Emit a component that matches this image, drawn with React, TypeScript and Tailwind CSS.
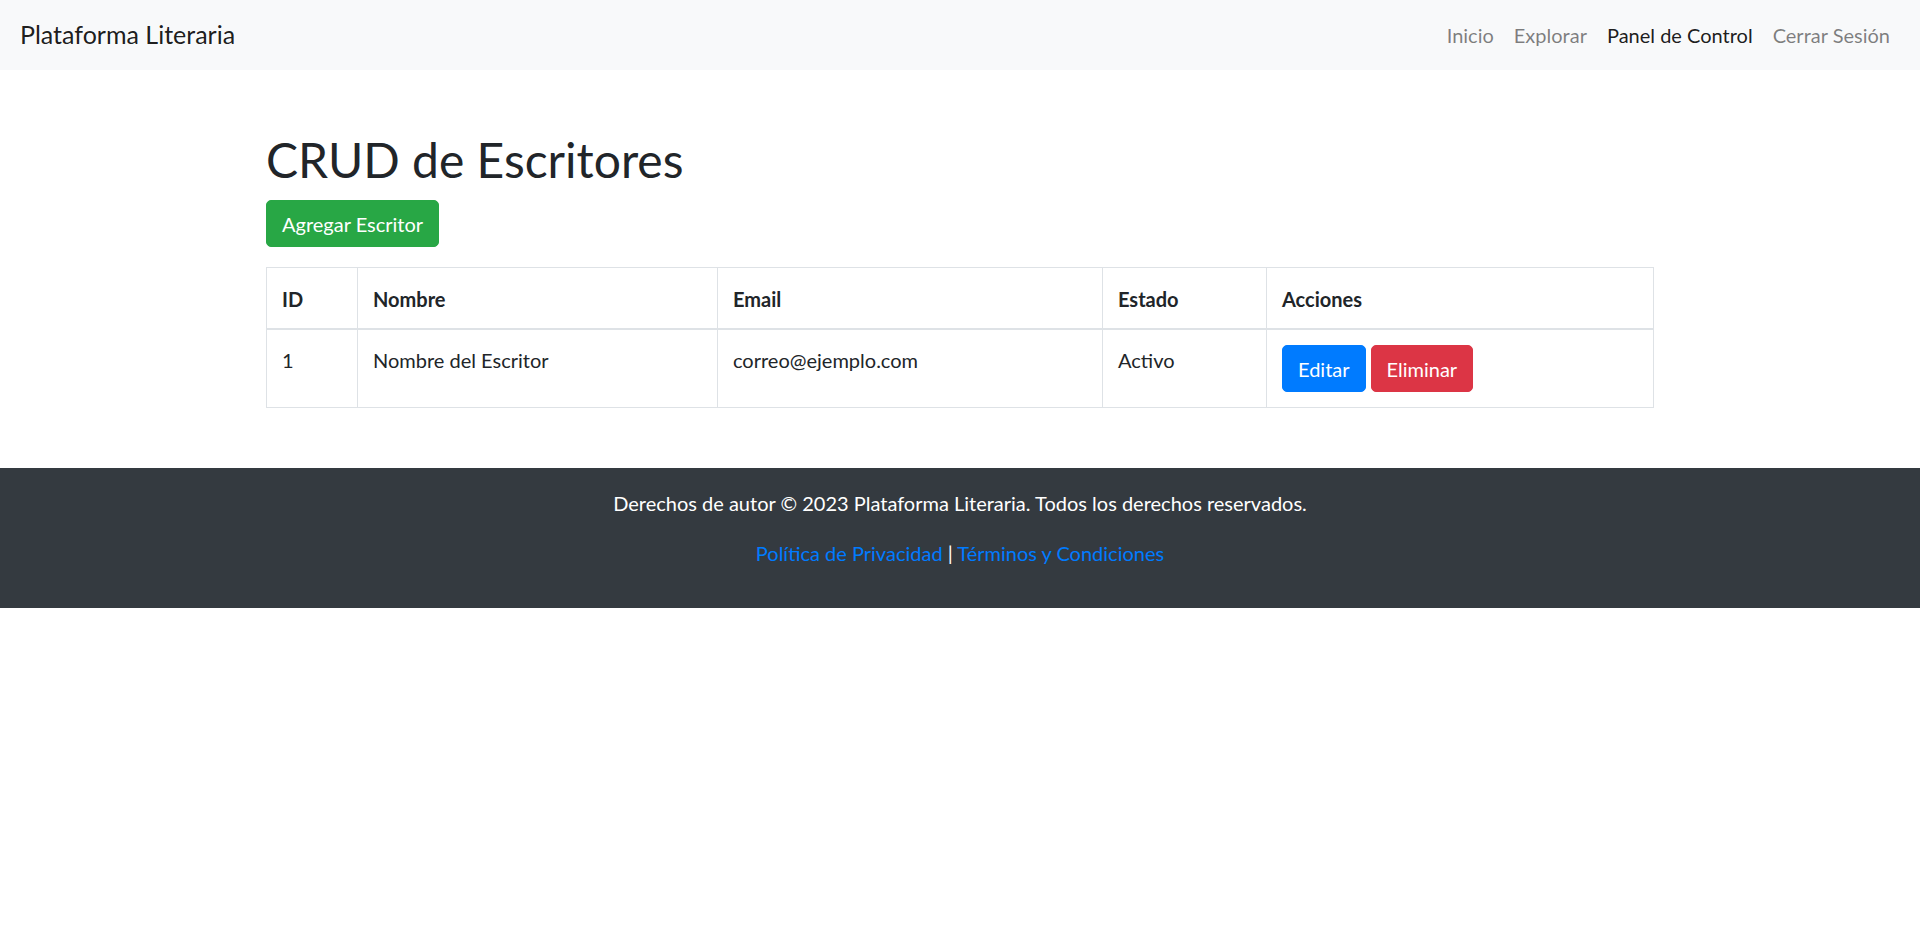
const navLinks = [
  { label: "Inicio", active: false },
  { label: "Explorar", active: false },
  { label: "Panel de Control", active: true },
  { label: "Cerrar Sesión", active: false },
];

export default function App() {
  return (
    <div className="min-h-screen bg-white font-['Lato',sans-serif] text-[20px] leading-[30px] text-[#212529]">
      {/* Navbar */}
      <nav className="flex h-[70px] items-center justify-between bg-[#f8f9fa] px-5">
        <a href="#" className="mr-5 py-[6px] text-[25px] leading-[37.5px] text-black/90">
          Plataforma Literaria
        </a>
        <ul className="flex items-center">
          {navLinks.map((l) => (
            <li key={l.label}>
              <a
                href="#"
                className={
                  l.active
                    ? "block px-[10px] py-[10px] text-black/90"
                    : "block px-[10px] py-[10px] text-black/50"
                }
              >
                {l.label}
              </a>
            </li>
          ))}
        </ul>
      </nav>

      {/* Main */}
      <main className="mx-auto mt-[60px] w-[1388px]">
        <h1 className="mb-[10px] text-[48px] font-normal leading-[60px]">CRUD de Escritores</h1>
        <button className="mb-5 rounded-[5px] border border-[#28a745] bg-[#28a745] px-[15px] py-[7.5px] text-white">
          Agregar Escritor
        </button>

        <table className="w-full border-collapse border border-[#dee2e6] text-left">
          <thead>
            <tr>
              <th className="w-[91px] border border-b-2 border-[#dee2e6] px-[15px] pt-[16px] pb-[14px] align-bottom font-bold">ID</th>
              <th className="w-[360px] border border-b-2 border-[#dee2e6] px-[15px] pt-[16px] pb-[14px] align-bottom font-bold">Nombre</th>
              <th className="w-[385px] border border-b-2 border-[#dee2e6] px-[15px] pt-[16px] pb-[14px] align-bottom font-bold">Email</th>
              <th className="w-[164px] border border-b-2 border-[#dee2e6] px-[15px] pt-[16px] pb-[14px] align-bottom font-bold">Estado</th>
              <th className="border border-b-2 border-[#dee2e6] px-[15px] pt-[16px] pb-[14px] align-bottom font-bold">Acciones</th>
            </tr>
          </thead>
          <tbody>
            <tr>
              <td className="border border-[#dee2e6] p-[15px] align-top">1</td>
              <td className="border border-[#dee2e6] p-[15px] align-top">Nombre del Escritor</td>
              <td className="border border-[#dee2e6] p-[15px] align-top">correo@ejemplo.com</td>
              <td className="border border-[#dee2e6] p-[15px] align-top">Activo</td>
              <td className="border border-[#dee2e6] p-[15px] align-top">
                <div className="flex gap-[5px]">
                  <button className="rounded-[5px] border border-[#007bff] bg-[#007bff] px-[15px] py-[7.5px] text-white">
                    Editar
                  </button>
                  <button className="rounded-[5px] border border-[#dc3545] bg-[#dc3545] px-[15px] py-[7.5px] text-white">
                    Eliminar
                  </button>
                </div>
              </td>
            </tr>
          </tbody>
        </table>
      </main>

      {/* Footer */}
      <footer className="mt-[60px] bg-[#343a40] py-5 text-center text-white">
        <p className="mb-5">Derechos de autor © 2023 Plataforma Literaria. Todos los derechos reservados.</p>
        <p className="mb-5">
          <a href="#" className="text-[#007bff]">Política de Privacidad</a> |{" "}
          <a href="#" className="text-[#007bff]">Términos y Condiciones</a>
        </p>
      </footer>
    </div>
  );
}
